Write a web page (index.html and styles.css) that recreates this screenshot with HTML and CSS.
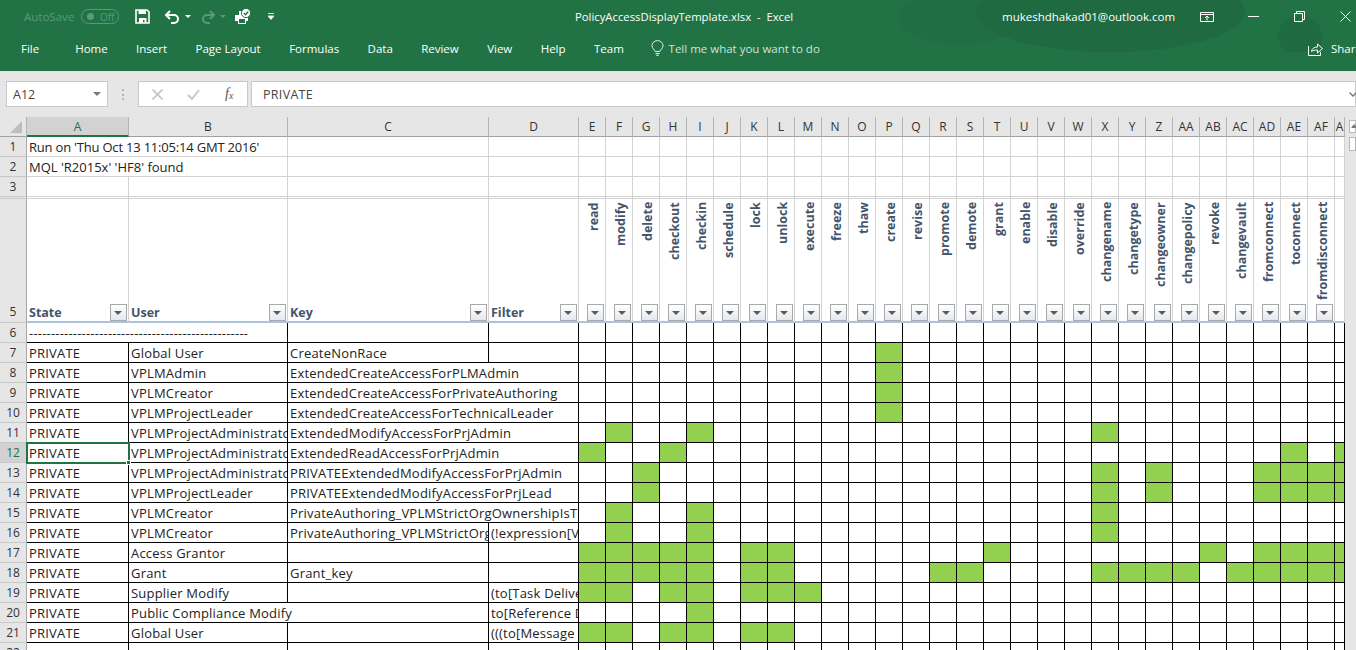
FILE: index.html
```html
<!DOCTYPE html>
<html lang="en">
<head>
<meta charset="utf-8">
<title>PolicyAccessDisplayTemplate.xlsx - Excel</title>
<link rel="stylesheet" href="styles.css">
</head>
<body>

<header class="ribbon">
  <svg class="ribbon-art" width="456" height="52" viewBox="0 0 456 52">
    <ellipse cx="60" cy="18" rx="62" ry="26" fill="#226e44"/>
    <ellipse cx="210" cy="12" rx="135" ry="40" fill="#1f6a41"/>
    <ellipse cx="400" cy="36" rx="22" ry="20" fill="#1f6a41"/>
  </svg>
  <div class="titlebar">
    <span class="autosave">AutoSave</span>
    <span class="toggle"><i></i>Off</span>
    <svg class="qa qa-save" width="15" height="15" viewBox="0 0 15 15">
      <path d="M1 1h11l2 2v11H1z" fill="none" stroke="#fff" stroke-width="1.6"/>
      <path d="M3.5 1h7.5v4H3.5zM4 9h7.5v5H9.5v-3H8v3H4z" fill="#fff"/>
    </svg>
    <svg class="qa qa-undo" width="17" height="14" viewBox="0 0 17 14">
      <path d="M6 1L2 5l4 4M2 5h8a4 4 0 0 1 0 8H7" fill="none" stroke="#fff" stroke-width="2"/>
    </svg>
    <span class="caret"></span>
    <svg class="qa qa-redo" width="15" height="14" viewBox="0 0 15 14">
      <path d="M9 1l4 4-4 4M13 5H6a4 4 0 0 0 0 8h3" fill="none" stroke="#5b9a75" stroke-width="2"/>
    </svg>
    <span class="caret caret-dim"></span>
    <svg class="qa qa-print" width="18" height="17" viewBox="0 0 18 17">
      <path d="M1 7h4V3h3v4h6v6h-2v3H4v-3H1z" fill="#fff"/>
      <path d="M5 11h6v4H5z" fill="#217346"/>
      <circle cx="12" cy="5" r="4.6" fill="#fff" stroke="#217346"/>
      <path d="M9.8 5l1.7 1.7 2.8-3.2" fill="none" stroke="#217346" stroke-width="1.3"/>
    </svg>
    <svg class="qa qa-more" width="6" height="7" viewBox="0 0 6 7">
      <path d="M0 .5h6M0 3h6L3 6.5z" fill="#fff" stroke="#fff" stroke-width=".8"/>
    </svg>
    <span class="doc-title">PolicyAccessDisplayTemplate.xlsx&nbsp; - &nbsp;Excel</span>
    <span class="account">mukeshdhakad01@outlook.com</span>
    <svg class="win win-display" width="14" height="10" viewBox="0 0 14 10">
      <path d="M.5.5h13v9H.5zM.5 2.5h13M7 8.5V4M5 6l2-2 2 2" fill="none" stroke="#fff"/>
    </svg>
    <svg class="win win-min" width="11" height="1" viewBox="0 0 11 1"><path d="M0 .5h11" stroke="#fff"/></svg>
    <svg class="win win-max" width="11" height="11" viewBox="0 0 11 11">
      <path d="M.5 2.5h8v8h-8zM2.5 2.5v-2h8v8h-2" fill="none" stroke="#fff"/>
    </svg>
    <svg class="win win-close" width="11" height="11" viewBox="0 0 11 11">
      <path d="M.5.5l10 10M10.5.5l-10 10" stroke="#fff"/>
    </svg>
  </div>
  <nav class="tabs">
    <a class="tab-file">File</a>
    <a>Home</a>
    <a>Insert</a>
    <a>Page Layout</a>
    <a>Formulas</a>
    <a>Data</a>
    <a>Review</a>
    <a>View</a>
    <a>Help</a>
    <a>Team</a>
    <svg class="bulb" width="13" height="16" viewBox="0 0 13 16">
      <path d="M4.2 11.5C3.6 9.5 1 8.5 1 5.6a5.5 5 0 0 1 11 0c0 2.9-2.6 3.9-3.2 5.9zM4.5 13.5h4M5.2 15.3h2.6" fill="none" stroke="#e4efe9"/>
    </svg>
    <span class="tell">Tell me what you want to do</span>
    <span class="share">
      <svg width="15" height="14" viewBox="0 0 15 14">
        <path d="M.5 4v9.5h12V10M3.5 9.5c.3-3 2.500-4.500 6-4.500V2l5 4.500-5 4.500V8c-2.500 0-4.500.3-6 1.500z" fill="none" stroke="#fff"/>
      </svg>
      Share
    </span>
  </nav>
</header>

<section class="formula-row">
  <div class="name-box">A12<span class="caret caret-gray"></span></div>
  <span class="grip"></span>
  <div class="fx-buttons">
    <svg width="11" height="11" viewBox="0 0 11 11"><path d="M.5.5l10 10M10.500.5l-10 10" stroke="#c4c4c4" stroke-width="1.6"/></svg>
    <svg width="13" height="11" viewBox="0 0 13 11"><path d="M1 6l4 4 7-9" fill="none" stroke="#c4c4c4" stroke-width="1.8"/></svg>
    <span class="fx">f<sub>x</sub></span>
  </div>
  <div class="formula-input">PRIVATE
    <svg width="8" height="5" viewBox="0 0 8 5"><path d="M.5.500L4 4 7.500.500" fill="none" stroke="#777" stroke-width="1.4"/></svg>
  </div>
</section>

<main class="sheet">
  <table class="grid">
    <colgroup>
      <col class="c-head"><col class="c-a"><col class="c-b"><col class="c-c"><col class="c-d">
      <col class="c-n"><col class="c-n"><col class="c-n"><col class="c-n"><col class="c-n"><col class="c-n"><col class="c-n">
      <col class="c-n"><col class="c-n"><col class="c-n"><col class="c-n"><col class="c-n"><col class="c-n"><col class="c-n">
      <col class="c-n"><col class="c-n"><col class="c-n"><col class="c-n"><col class="c-n"><col class="c-n"><col class="c-n">
      <col class="c-n"><col class="c-n"><col class="c-n"><col class="c-n"><col class="c-n"><col class="c-n"><col class="c-n">
      <col class="c-last">
    </colgroup>
    <thead>
      <tr class="letters">
        <th class="corner"><span class="corner-mark"></span></th>
        <th class="active">A</th><th>B</th><th>C</th><th>D</th>
        <th>E</th><th>F</th><th>G</th><th>H</th><th>I</th><th>J</th><th>K</th><th>L</th><th>M</th><th>N</th><th>O</th><th>P</th><th>Q</th><th>R</th><th>S</th><th>T</th><th>U</th><th>V</th><th>W</th><th>X</th><th>Y</th><th>Z</th><th>AA</th><th>AB</th><th>AC</th><th>AD</th><th>AE</th><th>AF</th><th>A</th>
      </tr>
    </thead>
    <tbody>
      <tr class="light"><th>1</th><td colspan="2" class="tight">Run on 'Thu Oct 13 11:05:14 GMT 2016'</td><td></td><td></td>
        <td></td><td></td><td></td><td></td><td></td><td></td><td></td><td></td><td></td><td></td><td></td><td></td><td></td><td></td><td></td><td></td><td></td><td></td><td></td><td></td><td></td><td></td><td></td><td></td><td></td><td></td><td></td><td></td><td></td></tr>
      <tr class="light"><th>2</th><td colspan="2" class="plain">MQL 'R2015x' 'HF8' found</td><td></td><td></td>
        <td></td><td></td><td></td><td></td><td></td><td></td><td></td><td></td><td></td><td></td><td></td><td></td><td></td><td></td><td></td><td></td><td></td><td></td><td></td><td></td><td></td><td></td><td></td><td></td><td></td><td></td><td></td><td></td><td></td></tr>
      <tr class="light"><th>3</th><td></td><td></td><td></td><td></td>
        <td></td><td></td><td></td><td></td><td></td><td></td><td></td><td></td><td></td><td></td><td></td><td></td><td></td><td></td><td></td><td></td><td></td><td></td><td></td><td></td><td></td><td></td><td></td><td></td><td></td><td></td><td></td><td></td><td></td></tr>
      <tr class="light sliver"><th></th><td></td><td></td><td></td><td></td>
        <td></td><td></td><td></td><td></td><td></td><td></td><td></td><td></td><td></td><td></td><td></td><td></td><td></td><td></td><td></td><td></td><td></td><td></td><td></td><td></td><td></td><td></td><td></td><td></td><td></td><td></td><td></td><td></td><td></td></tr>
      <tr class="titles">
        <th>5</th>
        <td><div class="title-cell">State<span class="filter"></span></div></td>
        <td><div class="title-cell">User<span class="filter"></span></div></td>
        <td><div class="title-cell">Key<span class="filter"></span></div></td>
        <td><div class="title-cell">Filter<span class="filter"></span></div></td>
        <td><div class="perm"><span>read</span><i class="filter"></i></div></td>
        <td><div class="perm"><span>modify</span><i class="filter"></i></div></td>
        <td><div class="perm"><span>delete</span><i class="filter"></i></div></td>
        <td><div class="perm"><span>checkout</span><i class="filter"></i></div></td>
        <td><div class="perm"><span>checkin</span><i class="filter"></i></div></td>
        <td><div class="perm"><span>schedule</span><i class="filter"></i></div></td>
        <td><div class="perm"><span>lock</span><i class="filter"></i></div></td>
        <td><div class="perm"><span>unlock</span><i class="filter"></i></div></td>
        <td><div class="perm"><span>execute</span><i class="filter"></i></div></td>
        <td><div class="perm"><span>freeze</span><i class="filter"></i></div></td>
        <td><div class="perm"><span>thaw</span><i class="filter"></i></div></td>
        <td><div class="perm"><span>create</span><i class="filter"></i></div></td>
        <td><div class="perm"><span>revise</span><i class="filter"></i></div></td>
        <td><div class="perm"><span>promote</span><i class="filter"></i></div></td>
        <td><div class="perm"><span>demote</span><i class="filter"></i></div></td>
        <td><div class="perm"><span>grant</span><i class="filter"></i></div></td>
        <td><div class="perm"><span>enable</span><i class="filter"></i></div></td>
        <td><div class="perm"><span>disable</span><i class="filter"></i></div></td>
        <td><div class="perm"><span>override</span><i class="filter"></i></div></td>
        <td><div class="perm"><span>changename</span><i class="filter"></i></div></td>
        <td><div class="perm"><span>changetype</span><i class="filter"></i></div></td>
        <td><div class="perm"><span>changeowner</span><i class="filter"></i></div></td>
        <td><div class="perm"><span>changepolicy</span><i class="filter"></i></div></td>
        <td><div class="perm"><span>revoke</span><i class="filter"></i></div></td>
        <td><div class="perm"><span>changevault</span><i class="filter"></i></div></td>
        <td><div class="perm"><span>fromconnect</span><i class="filter"></i></div></td>
        <td><div class="perm"><span>toconnect</span><i class="filter"></i></div></td>
        <td><div class="perm"><span>fromdisconnect</span><i class="filter"></i></div></td>
        <td><div class="perm perm-cut"><i class="filter"></i></div></td>
      </tr>
      <tr><th>6</th><td colspan="2">--------------------------------------------------</td><td></td><td></td>
        <td></td><td></td><td></td><td></td><td></td><td></td><td></td><td></td><td></td><td></td><td></td><td></td><td></td><td></td><td></td><td></td><td></td><td></td><td></td><td></td><td></td><td></td><td></td><td></td><td></td><td></td><td></td><td></td><td></td></tr>
      <tr><th>7</th><td>PRIVATE</td><td>Global User</td><td>CreateNonRace</td><td></td>
        <td></td><td></td><td></td><td></td><td></td><td></td><td></td><td></td><td></td><td></td><td></td><td class="g"></td><td></td><td></td><td></td><td></td><td></td><td></td><td></td><td></td><td></td><td></td><td></td><td></td><td></td><td></td><td></td><td></td><td></td></tr>
      <tr><th>8</th><td>PRIVATE</td><td>VPLMAdmin</td><td colspan="2">ExtendedCreateAccessForPLMAdmin</td>
        <td></td><td></td><td></td><td></td><td></td><td></td><td></td><td></td><td></td><td></td><td></td><td class="g"></td><td></td><td></td><td></td><td></td><td></td><td></td><td></td><td></td><td></td><td></td><td></td><td></td><td></td><td></td><td></td><td></td><td></td></tr>
      <tr><th>9</th><td>PRIVATE</td><td>VPLMCreator</td><td colspan="2">ExtendedCreateAccessForPrivateAuthoring</td>
        <td></td><td></td><td></td><td></td><td></td><td></td><td></td><td></td><td></td><td></td><td></td><td class="g"></td><td></td><td></td><td></td><td></td><td></td><td></td><td></td><td></td><td></td><td></td><td></td><td></td><td></td><td></td><td></td><td></td><td></td></tr>
      <tr><th>10</th><td>PRIVATE</td><td>VPLMProjectLeader</td><td colspan="2">ExtendedCreateAccessForTechnicalLeader</td>
        <td></td><td></td><td></td><td></td><td></td><td></td><td></td><td></td><td></td><td></td><td></td><td class="g"></td><td></td><td></td><td></td><td></td><td></td><td></td><td></td><td></td><td></td><td></td><td></td><td></td><td></td><td></td><td></td><td></td><td></td></tr>
      <tr><th>11</th><td>PRIVATE</td><td>VPLMProjectAdministrato</td><td colspan="2">ExtendedModifyAccessForPrjAdmin</td>
        <td></td><td class="g"></td><td></td><td></td><td class="g"></td><td></td><td></td><td></td><td></td><td></td><td></td><td></td><td></td><td></td><td></td><td></td><td></td><td></td><td></td><td class="g"></td><td></td><td></td><td></td><td></td><td></td><td></td><td></td><td></td><td></td></tr>
      <tr class="current"><th>12</th><td class="selected">PRIVATE</td><td>VPLMProjectAdministrato</td><td colspan="2">ExtendedReadAccessForPrjAdmin</td>
        <td class="g"></td><td></td><td></td><td class="g"></td><td></td><td></td><td></td><td></td><td></td><td></td><td></td><td></td><td></td><td></td><td></td><td></td><td></td><td></td><td></td><td></td><td></td><td></td><td></td><td></td><td></td><td></td><td class="g"></td><td></td><td class="g"></td></tr>
      <tr><th>13</th><td>PRIVATE</td><td>VPLMProjectAdministrato</td><td colspan="2">PRIVATEExtendedModifyAccessForPrjAdmin</td>
        <td></td><td></td><td class="g"></td><td></td><td></td><td></td><td></td><td></td><td></td><td></td><td></td><td></td><td></td><td></td><td></td><td></td><td></td><td></td><td></td><td class="g"></td><td></td><td class="g"></td><td></td><td></td><td></td><td class="g"></td><td class="g"></td><td class="g"></td><td class="g"></td></tr>
      <tr><th>14</th><td>PRIVATE</td><td>VPLMProjectLeader</td><td colspan="2">PRIVATEExtendedModifyAccessForPrjLead</td>
        <td></td><td></td><td class="g"></td><td></td><td></td><td></td><td></td><td></td><td></td><td></td><td></td><td></td><td></td><td></td><td></td><td></td><td></td><td></td><td></td><td class="g"></td><td></td><td class="g"></td><td></td><td></td><td></td><td class="g"></td><td class="g"></td><td class="g"></td><td class="g"></td></tr>
      <tr><th>15</th><td>PRIVATE</td><td>VPLMCreator</td><td colspan="2">PrivateAuthoring_VPLMStrictOrgOwnershipIsT</td>
        <td></td><td class="g"></td><td></td><td></td><td class="g"></td><td></td><td></td><td></td><td></td><td></td><td></td><td></td><td></td><td></td><td></td><td></td><td></td><td></td><td></td><td class="g"></td><td></td><td></td><td></td><td></td><td></td><td></td><td></td><td></td><td></td></tr>
      <tr><th>16</th><td>PRIVATE</td><td>VPLMCreator</td><td>PrivateAuthoring_VPLMStrictOrg</td><td>(!expression[V</td>
        <td></td><td class="g"></td><td></td><td></td><td class="g"></td><td></td><td></td><td></td><td></td><td></td><td></td><td></td><td></td><td></td><td></td><td></td><td></td><td></td><td></td><td class="g"></td><td></td><td></td><td></td><td></td><td></td><td></td><td></td><td></td><td></td></tr>
      <tr><th>17</th><td>PRIVATE</td><td>Access Grantor</td><td></td><td></td>
        <td class="g"></td><td class="g"></td><td class="g"></td><td class="g"></td><td class="g"></td><td></td><td class="g"></td><td class="g"></td><td></td><td></td><td></td><td></td><td></td><td></td><td></td><td class="g"></td><td></td><td></td><td></td><td></td><td></td><td></td><td></td><td class="g"></td><td></td><td class="g"></td><td class="g"></td><td class="g"></td><td class="g"></td></tr>
      <tr><th>18</th><td>PRIVATE</td><td>Grant</td><td>Grant_key</td><td></td>
        <td class="g"></td><td class="g"></td><td class="g"></td><td class="g"></td><td class="g"></td><td></td><td class="g"></td><td class="g"></td><td></td><td></td><td></td><td></td><td></td><td class="g"></td><td class="g"></td><td></td><td></td><td></td><td></td><td class="g"></td><td class="g"></td><td class="g"></td><td class="g"></td><td></td><td class="g"></td><td class="g"></td><td class="g"></td><td class="g"></td><td class="g"></td></tr>
      <tr><th>19</th><td>PRIVATE</td><td>Supplier Modify</td><td></td><td>(to[Task Delive</td>
        <td class="g"></td><td class="g"></td><td></td><td class="g"></td><td class="g"></td><td></td><td class="g"></td><td class="g"></td><td class="g"></td><td></td><td></td><td></td><td></td><td></td><td></td><td></td><td></td><td></td><td></td><td></td><td></td><td></td><td></td><td></td><td></td><td></td><td></td><td></td><td></td></tr>
      <tr><th>20</th><td>PRIVATE</td><td colspan="2">Public Compliance Modify</td><td>to[Reference D</td>
        <td></td><td></td><td></td><td></td><td class="g"></td><td></td><td></td><td></td><td></td><td></td><td></td><td></td><td></td><td></td><td></td><td></td><td></td><td></td><td></td><td></td><td></td><td></td><td></td><td></td><td></td><td></td><td></td><td></td><td></td></tr>
      <tr><th>21</th><td>PRIVATE</td><td>Global User</td><td></td><td>(((to[Message</td>
        <td class="g"></td><td class="g"></td><td></td><td class="g"></td><td class="g"></td><td></td><td class="g"></td><td class="g"></td><td></td><td></td><td></td><td></td><td></td><td></td><td></td><td></td><td></td><td></td><td></td><td></td><td></td><td></td><td></td><td></td><td></td><td></td><td></td><td></td><td></td></tr>
      <tr><th>22</th><td></td><td></td><td></td><td></td>
        <td></td><td></td><td></td><td></td><td></td><td></td><td></td><td></td><td></td><td></td><td></td><td></td><td></td><td></td><td></td><td></td><td></td><td></td><td></td><td></td><td></td><td></td><td></td><td></td><td></td><td></td><td></td><td></td><td></td></tr>
    </tbody>
  </table>
  <aside class="scrollbar">
    <div class="scroll-up"></div>
    <div class="scroll-thumb"></div>
  </aside>
</main>

</body>
</html>
```

FILE: styles.css
```css
html, body {
  margin: 0;
  padding: 0;
  height: 650px;
  overflow: hidden;
  background-color: #e6e6e6;
  font-family: "Open Sans", "Noto Sans", sans-serif;
}

/* ribbon */
.ribbon {
  position: relative;
  height: 71px;
  background-color: #217346;
  color: #fff;
  overflow: hidden;
}
.ribbon-art {
  position: absolute;
  right: 0;
  top: 0;
}
.titlebar {
  position: relative;
  display: flex;
  align-items: center;
  height: 33px;
  padding-left: 24px;
  font-size: 11.5px;
}
.autosave {
  color: #5b9a75;
  width: 57px;
}
.toggle {
  display: flex;
  align-items: center;
  gap: 6px;
  width: 38px;
  height: 15px;
  box-sizing: border-box;
  padding-left: 5px;
  border: 1px solid #5b9a75;
  border-radius: 8px;
  color: #5b9a75;
  font-size: 10px;
}
.toggle i {
  width: 7px;
  height: 7px;
  border-radius: 50%;
  background-color: #5b9a75;
}
.qa-save { margin-left: 16px; }
.qa-undo { margin-left: 14px; }
.qa-redo { margin-left: 10px; }
.qa-print { margin-left: 8px; }
.qa-more { margin-left: 16px; }
.caret {
  width: 0;
  height: 0;
  margin-left: 4px;
  border: 3px solid transparent;
  border-top: 3px solid #fff;
  border-bottom: 0;
}
.caret-dim { border-top-color: #5b9a75; }
.doc-title {
  margin-left: 301px;
  width: 427px;
  font-size: 11.3px;
  white-space: nowrap;
}
.account {
  width: 198px;
  white-space: nowrap;
  font-size: 11.5px;
}
.win-min { margin-left: 34px; }
.win-max { margin-left: 35px; }
.win-close { margin-left: 35px; }

.tabs {
  position: relative;
  display: flex;
  align-items: center;
  gap: 28.4px;
  height: 30px;
  padding-left: 21px;
  font-size: 11.5px;
  white-space: nowrap;
}
.tab-file { margin-right: 7.6px; }
.bulb { margin-left: -1px; margin-right: -24px; }
.tell { color: #cfe2d8; }
.share {
  position: absolute;
  left: 1308px;
  top: 8px;
  display: flex;
  align-items: center;
  gap: 8px;
}

/* name box and formula bar */
.formula-row {
  display: flex;
  height: 36px;
  padding-top: 10px;
  padding-left: 6px;
  font-size: 12.5px;
  color: #444;
}
.name-box, .fx-buttons, .formula-input {
  display: flex;
  align-items: center;
  height: 26px;
  box-sizing: border-box;
  background-color: #fff;
  border: 1px solid #c8c8c8;
}
.name-box {
  justify-content: space-between;
  width: 102px;
  padding: 0 6px;
}
.caret-gray {
  border-width: 4px;
  border-top-color: #7a7a7a;
}
.grip {
  width: 2px;
  height: 11px;
  margin: 8px 14px 0 14px;
  border-left: 2px dotted #b4b4b4;
  box-sizing: border-box;
}
.fx-buttons {
  width: 110px;
  padding-left: 13px;
  gap: 24px;
}
.fx {
  margin-left: 1px;
  font-family: "Liberation Serif", serif;
  font-style: italic;
  font-size: 14px;
  color: #555;
}
.fx sub {
  font-size: 10px;
  vertical-align: -1px;
  line-height: 0;
}
.formula-input {
  flex: 1;
  justify-content: space-between;
  margin-left: 3px;
  padding: 0 0 0 11px;
  letter-spacing: .3px;
}
.formula-input svg { margin-right: -2px; }

/* sheet */
.sheet {
  display: flex;
  height: 533px;
  overflow: hidden;
}
.grid {
  table-layout: fixed;
  width: 1345px;
  height: 533px;
  flex: none;
  border-collapse: separate;
  border-spacing: 0;
  background-color: #fff;
  font-size: 13px;
  color: #222;
}
.c-head { width: 27px; }
.c-a { width: 102px; }
.c-b { width: 159px; }
.c-c { width: 201px; }
.c-d { width: 90px; }
.c-n { width: 27px; }
.c-last { width: 10px; }

.grid tr { height: 20px; }
.grid td, .grid th {
  padding: 0;
  overflow: hidden;
  white-space: nowrap;
  box-sizing: border-box;
}
.grid td {
  padding: 1px 0 0 2px;
  line-height: 17px;
  letter-spacing: .2px;
  border-right: 1px solid #000;
  border-bottom: 1px solid #000;
}
.grid th {
  font-weight: normal;
  background-color: #e6e6e6;
  border-right: 1px solid #a8a8a8;
  border-bottom: 1px solid #c8c8c8;
  color: #333;
  font-size: 12px;
}
.letters th {
  border-right-color: #b4b4b4;
  border-bottom-color: #a0a0a0;
}
.letters th.active {
  background-color: #d2d2d2;
  color: #217346;
  border-bottom: 2px solid #217346;
}
.corner { position: relative; }
.corner-mark {
  position: absolute;
  right: 4px;
  bottom: 3px;
  width: 0;
  height: 0;
  border-left: 12px solid transparent;
  border-bottom: 12px solid #bdbdbd;
}
.grid .tight { letter-spacing: -.2px; }
.grid .plain { letter-spacing: 0; }

.light td {
  border-right-color: #d2d2d2;
  border-bottom-color: #d2d2d2;
}
.grid .sliver { height: 2px; }
.grid .sliver td, .grid .sliver th {
  height: 2px;
  padding: 0;
  font-size: 0;
  line-height: 0;
}

.grid .titles { height: 124px; }
.grid .titles th {
  vertical-align: bottom;
  padding-bottom: 1px;
  line-height: 18px;
}
.grid .titles td {
  padding: 0;
  vertical-align: bottom;
  letter-spacing: 0;
  border-right-color: #d2d2d2;
  border-bottom: 2px solid #a9c4de;
  color: #44546a;
  font-size: 12.5px;
  font-weight: bold;
}
.title-cell {
  display: flex;
  justify-content: space-between;
  align-items: flex-end;
  height: 18px;
  padding-left: 2px;
  line-height: 17px;
}
.perm {
  display: flex;
  flex-direction: column;
  height: 122px;
  box-sizing: border-box;
  padding-top: 3px;
}
.perm span {
  flex: 1;
  writing-mode: vertical-rl;
  transform: rotate(180deg);
  text-align: right;
  line-height: 14px;
  padding-right: 8px;
}
.perm-cut i {
  align-self: flex-start;
  margin-left: 9px;
  margin-top: auto;
}
.filter {
  display: block;
  position: relative;
  flex: none;
  align-self: flex-end;
  width: 17px;
  height: 17px;
  box-sizing: border-box;
  margin-right: 1px;
  background: linear-gradient(#fff, #e4e9ef);
  border: 1px solid #a9a9a9;
}
.filter::after {
  content: "";
  position: absolute;
  left: 3px;
  top: 6px;
  border: 4px solid transparent;
  border-top: 4px solid #5a5a5a;
  border-bottom: 0;
}

.g { background-color: #92d050; }
.current th {
  background-color: #d2d2d2;
  color: #217346;
}
.grid .selected {
  position: relative;
  outline: 2px solid #217346;
  outline-offset: -1px;
  overflow: visible;
}
.selected::after {
  content: "";
  position: absolute;
  right: -3px;
  bottom: -3px;
  width: 5px;
  height: 5px;
  background-color: #217346;
  border: 1px solid #fff;
  box-sizing: border-box;
}

/* scrollbar */
.scrollbar {
  flex: 1;
  padding: 3px 0 0 4px;
}
.scroll-up {
  position: relative;
  height: 13px;
  background-color: #fff;
  border: 1px solid #b8b8b8;
  box-sizing: border-box;
}
.scroll-up::after {
  content: "";
  position: absolute;
  left: 1px;
  top: 3px;
  border: 3px solid transparent;
  border-bottom: 4px solid #777;
  border-top: 0;
}
.scroll-thumb {
  height: 14px;
  margin-top: 4px;
  background-color: #fff;
  border: 1px solid #b8b8b8;
  box-sizing: border-box;
}
```
